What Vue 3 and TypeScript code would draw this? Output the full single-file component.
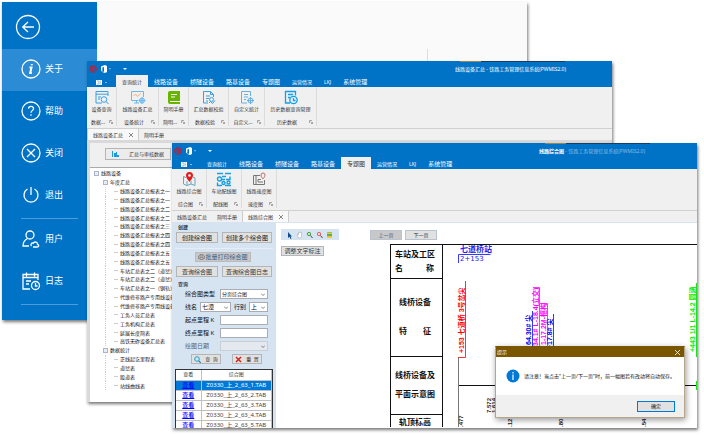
<script setup lang="ts">
import { ref } from 'vue'

interface RibbonGroup { label: string; icon: string; caption: string; width: number }
interface DocTab { label: string; active?: boolean }
interface AppWindow {
  id: string
  title: string
  activeTab: string
  groups: RibbonGroup[]
  docs: DocTab[]
}
interface TreeRow { text: string; level: number }

const menuTabs = ['查询统计', '线路设备', '桥隧设备', '路基设备', '专题图', '运营情况', 'LKJ', '系统管理']
const smallTabs = ['查询统计', '运营情况', 'LKJ']

const windows: AppWindow[] = [
  {
    id: 'summary',
    title: '线路设备汇总',
    activeTab: '查询统计',
    groups: [
      { label: '设备查询', icon: 'search', caption: '数据...', width: 30 },
      { label: '线路设备汇总', icon: 'monitor', caption: '设备统计', width: 42 },
      { label: '简明手册', icon: 'book', caption: '简明...', width: 30 },
      { label: '汇总数据校验', icon: 'check', caption: '数据校验', width: 40 },
      { label: '自定义统计', icon: 'custom', caption: '自定义...', width: 36 },
      { label: '历史数据查询管理', icon: 'history', caption: '历史数据', width: 52 },
    ],
    docs: [{ label: '线路设备汇总', active: true }, { label: '简明手册' }],
  },
  {
    id: 'diagram',
    title: '线路综合图',
    activeTab: '专题图',
    groups: [
      { label: '线路综合图', icon: 'pin', caption: '综合图', width: 35 },
      { label: '车站配线图', icon: 'wiring', caption: '配线图', width: 35 },
      { label: '线路速度图', icon: 'speed', caption: '速度图', width: 35 },
    ],
    docs: [{ label: '线路设备汇总' }, { label: '简明手册' }, { label: '线路综合图', active: true }],
  },
]

const tree: TreeRow[] = [
  { text: '线路设备', level: 0 },
  { text: '年度汇总', level: 1 },
  ...[
    '线路设备汇总报表之一', '线路设备汇总报表之一', '线路设备汇总报表之二', '线路设备汇总报表之二',
    '线路设备汇总报表之三', '线路设备汇总报表之四', '线路设备汇总报表之四', '线路设备汇总报表之五',
    '线路设备汇总报表之五', '车站汇总表之二（道岔）', '车站汇总表之二（道岔）', '车站汇总表之一（钢轨）',
    '代维修非路产专用线设备', '代维修非路产专用线设备', '工务人员汇总表', '工务机构汇总表',
    '延展长度简表', '高铁无砟设备汇总表',
  ].map((text) => ({ text, level: 2 })),
  { text: '数据统计', level: 1 },
  ...['正线起讫里程表', '道岔表', '股道表', '站线曲线表'].map((text) => ({ text, level: 2 })),
]

const files = [1, 2, 3, 4, 5].map((n) => `Z0330_上_2_63_${n}.TAB`)
const selectedFile = ref(0)
const dialogOpen = ref(true)
</script>

<template>
  <main class="desktop">
    <section class="window backstage">
      <nav class="side">
        <button class="back" aria-label="返回">
          <svg width="26" height="26" viewBox="0 0 26 26"><circle cx="13" cy="13" r="11.5" /><path d="M19 13H8M13 8l-5.300 5 5.300 5" /></svg>
        </button>
        <a class="entry current" href="#about">
          <svg width="20" height="20" viewBox="0 0 20 20"><circle cx="10" cy="10" r="9" /><path class="heavy" d="M8.500 8.500h2l-1.300 5.500h1.600M10.800 5v1.200" /></svg>关于
        </a>
        <a class="entry" href="#help">
          <svg width="20" height="20" viewBox="0 0 20 20"><circle cx="10" cy="10" r="9" /><path d="M7.500 7.600c.2-3.200 5.200-2.900 5 .1-.1 1.900-2.500 2-2.500 4M10 13.200v1.500" /></svg>帮助
        </a>
        <a class="entry" href="#close">
          <svg width="20" height="20" viewBox="0 0 20 20"><circle cx="10" cy="10" r="9" /><path d="M6 6l8 8M14 6l-8 8" /></svg>关闭
        </a>
        <a class="entry" href="#exit">
          <svg width="20" height="20" viewBox="0 0 20 20"><path d="M10 2v8M6.500 4a7 7 0 1 0 7 0" /></svg>退出
        </a>
        <hr>
        <a class="entry" href="#user">
          <svg width="20" height="20" viewBox="0 0 20 20"><circle cx="9" cy="6" r="4" /><path d="M6.500 9.500C3.500 11 2 13 2 17h6" /><path d="M10.500 17c-1.500-2 .5-3.500 1.800-2.800 1.200-2.200 4.500-1 4.200 1.200 2 .5 1.300 2.600-.5 2.600h-4" /></svg>用户
        </a>
        <a class="entry" href="#log">
          <svg width="20" height="20" viewBox="0 0 20 20"><path d="M9 18H2V3.500h15V9M2 6.500h15M5.500 1.500v4M13.500 1.500v4M5 10h5M5 13h3" /><circle cx="14.500" cy="14.500" r="4" /><path d="M14.500 12v3h2" /></svg>日志
        </a>
        <hr>
      </nav>
      <div class="pane"><div class="recent"></div><div class="info"></div></div>
    </section>

    <section v-for="win in windows" :key="win.id" class="window app" :class="win.id">
      <header class="titlebar">
        <svg class="rail" width="8" height="8" viewBox="0 0 8 8"><path d="M1.800 6.200A3 3 0 1 1 6.200 6.200M2.500 3.500h3M4 3.500v2.800M2 7h4" /></svg>
        <svg width="11" height="8" viewBox="0 0 11 8"><path d="M1 1.500 5 0l2 1v6L5 8 1 6.500l3 .3V1.900L2.400 2.400v3L1 6z" fill="#fff" /><path d="M9 3.500h2l-1 1z" fill="#fff" /></svg>
        <svg class="quick" width="4" height="4" viewBox="0 0 4 4"><path d="M0 1h4L2 3z" fill="#fff" /></svg>
        <h1><b>{{ win.title }}</b><span> - 铁路工务管理信息系统(PWMIS2.0)</span></h1>
      </header>
      <nav class="tabs">
        <button class="file" aria-label="文件">
          <svg width="11" height="5" viewBox="0 0 11 5"><path d="M0 0h6v5H0z" fill="#fff" /><path d="M1 1h2v3H1M4 1h1M4 2.500h1M4 4h1" stroke="#69a" stroke-width=".6" fill="none" /><path d="M9 2h2l-1 1z" fill="#fff" /></svg>
        </button>
        <button v-for="tab in menuTabs" :key="tab" class="tab" :class="{ active: tab === win.activeTab, small: smallTabs.includes(tab) }">{{ tab }}</button>
      </nav>
      <div class="ribbon">
        <div v-for="group in win.groups" :key="group.label" class="group" :style="{ width: group.width + 'px' }">
          <button class="tool">
            <svg width="16" height="15" viewBox="0 0 16 15" fill="none" stroke="#3aa0e0">
              <g v-if="group.icon === 'search'"><path d="M3 13H2V1.500h12V6M2 4.200h12M4 7h3M4 9h2M8 13H3" /><circle cx="10" cy="9.500" r="2.800" /><path d="m12 11.500 2.500 2.500" /></g>
              <g v-else-if="group.icon === 'monitor'"><path d="M8 10.500H1.500v-9h12V7M4 13h5M6.500 10.500V13" stroke="#6ab8f0" /><path d="m3.500 6 2-2 2 2.500 3-3" stroke="#f4b183" /><circle cx="12" cy="10.500" r="2.500" fill="#b8dcf6" stroke="#6ab8f0" /><path d="M12 7v7M8.500 10.500h7" stroke="#6ab8f0" /></g>
              <g v-else-if="group.icon === 'book'"><path d="M4 1h10v13H4a2 2 0 0 1-2-2V3a2 2 0 0 1 2-2z" fill="#68b500" stroke="none" /><path d="M5 4.500h6M5 7h4M4 11.500h10" stroke="#fff" /></g>
              <g v-else-if="group.icon === 'check'"><path d="M7 13H2.500V1.500h7l3 3V7M9.500 1.500v3h3M5 6h4M5 8.500h3M5 11h2" /><circle cx="10.500" cy="9.500" r="2" /><path d="m8 13 1.500-1.500 2 2 2.500-3" /></g>
              <g v-else-if="group.icon === 'custom'"><path d="M8 13H2.500V1.500h9V6M5 4.500h4M5 7h4M5 9.500h2" stroke="#6ab0df" /><circle cx="11.500" cy="10.500" r="2.500" stroke="#6ab0df" /><path d="M11.500 7v7M8 10.500h7" stroke="#6ab0df" /></g>
              <g v-else-if="group.icon === 'history'" stroke="#0ea0ee" stroke-width="1.300"><path d="M7 13H2.500V1.500h10v4M5 4.500h5M5 7.500h2" /><circle cx="10.500" cy="10" r="3.700" /><path d="M10.500 8v2.500h2" /></g>
              <g v-else-if="group.icon === 'pin'"><path d="M5 5.500 2.500 4.500V12L6 13.500l4-1.500 4 1.500V6L12 5.200M6 9v4M10 9v3" stroke="#68a6bb" /><path d="M8.500 0a3.500 3.500 0 0 0-3.500 3.500C5 6 8.500 10 8.500 10S12 6 12 3.500A3.500 3.500 0 0 0 8.500 0z" fill="#e21b1b" stroke="none" /><circle cx="8.500" cy="3.500" r="1.300" fill="#fff" stroke="none" /></g>
              <g v-else-if="group.icon === 'wiring'" stroke="#189fdf" stroke-width="1.400"><path d="M1 1.500h6M9 1.500h6M6 4.500h4M14 4.500v3h-4" /><circle cx="3.500" cy="7" r="2" /><path d="M6 7.500h3M1.500 10.500v3H6M9 13.500h6" /><circle cx="7.500" cy="11" r="1.500" /><circle cx="12.500" cy="10.500" r="1.500" /></g>
              <g v-else stroke="#777"><path d="M9 3.500H2.500v9h11V8M5 3.500v9M7 10V7.500h3M7 10h5" /><path d="M12 1a2 2 0 0 0-2 2c0 1.700 2 4 2 4s2-2.300 2-4a2 2 0 0 0-2-2z" stroke="#b96d6d" /></g>
            </svg>
            {{ group.label }}
          </button>
          <div class="caption">
            <span>{{ group.caption }}</span>
            <svg width="4" height="4" viewBox="0 0 4 4" fill="none" stroke="#888" stroke-width=".7"><path d="M.5 3V.5H3M1.500 1.500l2 2V2M3.500 3.500H2" /></svg>
          </div>
        </div>
      </div>
      <nav class="docs">
        <button v-for="doc in win.docs" :key="doc.label" class="doc" :class="{ active: doc.active }">
          {{ doc.label }}
          <svg v-if="doc.active" width="4" height="4" viewBox="0 0 4 4" stroke="#555" stroke-width=".7"><path d="M0 0l4 4M4 0 0 4" /></svg>
        </button>
      </nav>

      <div v-if="win.id === 'summary'" class="summary-body">
        <div class="actions">
          <button class="btn">
            <svg width="7" height="6" viewBox="0 0 7 6"><path d="M0 0h1v6H0zM2 2h2v4H2zM4 1h1v5H4zM5 4h2v2H5z" fill="#1a9be0" /></svg>
            汇总与审核数据
          </button>
        </div>
        <ul class="tree">
          <li v-for="(row, i) in tree" :key="i" :class="'level' + row.level">
            <i :class="row.level < 2 ? 'box' : 'dash'"></i>{{ row.text }}
          </li>
        </ul>
      </div>

      <div v-else class="diagram-body">
        <aside class="panel">
          <h2>创建</h2>
          <div class="pair create"><button class="btn">创建综合图</button><button class="btn">创建多个综合图</button></div>
          <button class="btn print">
            <svg width="7" height="6" viewBox="0 0 7 6" fill="none" stroke="#777" stroke-width=".7"><path d="M2 2V.5h3V2M2 4.500H.5V2h6v2.500H5M2 3.500h3v2H2z" /></svg>批量打印综合图
          </button>
          <div class="pair look"><button class="btn">查询综合图</button><button class="btn">查询综合图日志</button></div>
          <h2>查询</h2>
          <form class="query" @submit.prevent>
            <div class="row">
              <label for="kind">综合图类型</label>
              <span class="pick wide"><select id="kind"><option>分页综合图</option></select><svg width="4" height="3" viewBox="0 0 4 3"><path d="M0 .5l2 2 2-2" /></svg></span>
            </div>
            <div class="row">
              <label for="line">线名</label>
              <span class="pick line"><select id="line"><option>七漳</option></select><svg width="4" height="3" viewBox="0 0 4 3"><path d="M0 .5l2 2 2-2" /></svg></span>
              <label for="dir">行别</label>
              <span class="pick dir"><select id="dir"><option>上</option></select><svg width="4" height="3" viewBox="0 0 4 3"><path d="M0 .5l2 2 2-2" /></svg></span>
            </div>
            <div class="row"><label for="from">起点里程 K</label><input id="from" class="wide" type="text"></div>
            <div class="row"><label for="to">终点里程 K</label><input id="to" class="wide" type="text"></div>
            <div class="row">
              <label class="dim" for="date">绘图日期</label>
              <span class="pick wide off"><select id="date" disabled><option></option></select><svg width="4" height="3" viewBox="0 0 4 3"><path d="M0 .5l2 2 2-2" /></svg></span>
            </div>
            <div class="submit">
              <button class="btn" type="submit"><svg width="7" height="7" viewBox="0 0 7 7" fill="none"><circle cx="3" cy="3" r="2.300" fill="#c6ecfa" stroke="#2299cc" /><path d="m4.800 4.800 2 2" stroke="#2277bb" stroke-width="1.200" /></svg>查&nbsp; 询</button>
              <button class="btn" type="reset"><svg width="7" height="7" viewBox="0 0 7 7"><path d="m1 1 5 5M6 1 1 6" stroke="#d71912" stroke-width="1.400" /></svg>重&nbsp; 置</button>
            </div>
          </form>
          <div class="results">
            <table>
              <thead><tr><th>查看</th><th>综合图</th></tr></thead>
              <tbody>
                <tr v-for="(file, i) in files" :key="file" :class="{ selected: i === selectedFile }" @click="selectedFile = i">
                  <td><a href="#view">查看</a></td><td>{{ file }}</td>
                </tr>
              </tbody>
            </table>
          </div>
        </aside>
        <div class="tools">
          <div class="toolbar">
            <button aria-label="选择"><svg width="7" height="8" viewBox="0 0 7 8"><path d="M2 1v6l1.500-1.300L4.500 8l1-.5-1-2H6z" fill="#124d88" /></svg></button>
            <button aria-label="平移"><svg width="7" height="8" viewBox="0 0 7 8"><path d="M1.500 4.500V3l1 1V1.500h1V1h1v.5h1v4L4.500 7h-2z" fill="#fff" stroke="#aaa" stroke-width=".6" /></svg></button>
            <button aria-label="放大"><svg width="7" height="8" viewBox="0 0 7 8"><circle cx="3" cy="3" r="1.700" fill="#bfe8b5" stroke="#49a34a" /><path d="m4.500 4.500 2 2.500" stroke="#444" /></svg></button>
            <button aria-label="缩小"><svg width="7" height="8" viewBox="0 0 7 8"><circle cx="3" cy="3" r="1.700" fill="#fbd1d1" stroke="#d66" /><path d="m4.500 4.500 2 2.500" stroke="#444" /></svg></button>
            <button aria-label="图层"><svg width="7" height="8" viewBox="0 0 7 8"><path d="M1 1h5v6H1z" fill="#f1c43c" /><path d="M1 3h5v2H1z" fill="#5cb146" /><path d="M1 1h5v1H1z" fill="#8bca50" /></svg></button>
          </div>
          <button class="btn adjust">调整文字标注</button>
        </div>
        <div class="sheet">
          <div class="pager"><button class="btn prev">上一页</button><button class="btn">下一页</button></div>
          <svg class="chart" role="img" aria-label="线路综合图">
            <g stroke="#111" fill="none">
              <path d="M1.500 184V1.500M53.500 1.500V184M1.500 35.500h52M1.500 113.500h52M1.500 171.500h52" />
              <line x1="1" x2="100%" y1="1.500" y2="1.500" />
              <line x1="69" x2="100%" y1="142.500" y2="142.500" />
              <path d="M69.500 114v70" stroke="#777" />
            </g>
            <g class="names">
              <text x="6" y="14">车站及工区</text><text x="6" y="28">名</text><text x="37" y="28">称</text>
              <text x="10" y="62">线桥设备</text><text x="10" y="91">特</text><text x="34" y="91">征</text>
              <text x="6" y="135">线桥设备及</text><text x="6" y="154">平面示意图</text><text x="10" y="182">轨顶标高</text>
            </g>
            <g fill="#2222ee"><text class="station" x="71" y="9">七道桥站</text><text class="mile" x="71" y="18">2+153</text></g>
            <path d="M69.500 20v-8.500h32M143.500 103V68M164.500 103V71" stroke="#3a3aff" fill="none" />
            <path d="M69 114.500h7.500V38" stroke="#f33" fill="none" />
            <path d="M144 44.500h6.500V103M151 60.500h7.500V103" stroke="#f3f" fill="none" />
            <g class="marks">
              <text transform="translate(75 110) rotate(-90)" fill="#f00">+153 七道桥 3号岔尖</text>
              <text transform="translate(142 102) rotate(-90)" fill="#00f">64.30# 尖</text>
              <text transform="translate(149 103) rotate(-90)" fill="#f0f">34.1# L-18.4(立交)</text>
              <text transform="translate(157 102) rotate(-90)" fill="#f0f">1-17.2M-框构</text>
              <text transform="translate(163 106) rotate(-90)" fill="#00f">+17.8# 尖</text>
              <text transform="translate(306 109) rotate(-90)" fill="#0e0">+443 1/1 L-14.2 圆涵</text>
            </g>
            <path d="M307.500 40v74M307.500 138v9" stroke="#2d2" />
            <g class="levels">
              <text transform="translate(74 184) rotate(-90)">.477</text>
              <text transform="translate(102 170) rotate(-90)">7.572</text>
              <text transform="translate(107 170) rotate(-90)">1.614</text>
              <text transform="translate(123 184) rotate(-90)">.12</text>
              <text transform="translate(174 184) rotate(-90)">.80</text>
              <text transform="translate(257 184) rotate(-90)">.54</text>
            </g>
          </svg>
        </div>
        <div v-if="dialogOpen" class="dialog" role="dialog" aria-labelledby="tip-title">
          <header><span id="tip-title">提示</span><button aria-label="关闭提示" @click="dialogOpen = false"><svg width="5" height="5" viewBox="0 0 5 5" stroke="#fff" stroke-width=".8"><path d="M0 0l5 5M5 0 0 5" /></svg></button></header>
          <div class="message">
            <svg width="14" height="14" viewBox="0 0 14 14"><circle cx="7" cy="7" r="6.500" fill="#0078d7" /><path d="M7 3v1.500M7 5.500V11" stroke="#fff" stroke-width="1.200" /></svg>
            <p>请注意！当点击"上一页/下一页"时，前一幅图若有改动将自动保存。</p>
          </div>
          <footer><button @click="dialogOpen = false">确定</button></footer>
        </div>
      </div>
    </section>
  </main>
</template>

<style>
body { margin: 0; background: #fff; }
</style>

<style scoped>
.desktop { position: relative; height: 100vh; min-height: 435px; overflow: hidden; font: 5px/8px "Noto Sans", "Noto Sans CJK SC", sans-serif; color: #333; }
.desktop *, .desktop *::before { box-sizing: border-box; }
svg { display: block; flex: none; }
button, input, select { font: inherit; color: inherit; padding: 0; margin: 0; border: 0; background: none; border-radius: 0; white-space: nowrap; }
a { color: inherit; text-decoration: none; }
h1, h2, p, ul { margin: 0; padding: 0; font: inherit; }
.window { position: absolute; box-shadow: 1px 2px 3px #0008; }

.backstage { left: 2px; right: 177px; top: 2px; bottom: 115px; display: flex; background: #fafafa; }
.side { width: 95px; background: #0173c7; color: #fff; display: flex; flex-direction: column; }
.side svg { fill: none; stroke: #fff; stroke-width: 1.3; }
.side .heavy { stroke-width: 2; }
.back { height: 47px; padding: 3px 0 0 13px; display: flex; align-items: center; }
.entry { height: 42px; display: flex; align-items: center; gap: 4px; padding: 0 0 2px 19px; font-size: 9px; line-height: 12px; }
.entry.current { background: #2b8bd4; }
.side hr { width: 57px; height: 1px; margin: 1px 0 0 19px; border: 0; background: #4c9ddb; }
.pane { flex: 1; display: flex; padding-top: 47px; }
.recent { flex: 331; }
.info { flex: 99; border-left: 1px solid #ddd; }

.app { display: flex; flex-direction: column; background: #f0f0f0; }
.summary { left: 87px; right: 92px; top: 61px; bottom: 33px; }
.diagram { left: 172px; right: 7px; top: 143px; bottom: 7px; }
.titlebar { height: 14px; background: linear-gradient(90deg, #0173c7 71%, #8e8a5c 71% 75%, #173f63 75% 91%, #0173c7 91%) 0 0 / 100% 1px no-repeat #0173c7; display: flex; align-items: center; padding: 2px 46px 0 2px; gap: 3px; }
.rail { fill: none; stroke: #e01020; stroke-width: 1.2; }
.quick { margin-left: 9px; }
.titlebar h1 { margin-left: auto; color: #fff; white-space: nowrap; }
.titlebar b { font-weight: 400; }
.diagram .titlebar b { font-weight: 700; }
.diagram .titlebar { padding-right: 52px; }
.diagram .titlebar span { color: #8abce3; }
.tabs { height: 12px; background: #0173c7; color: #fff; display: flex; }
.file { width: 29px; padding: 2px 0 0 9px; display: flex; align-items: center; }
.tab { padding: 1px 6px 0; font-size: 6px; }
.tab.small { font-size: 5px; }
.tab.active { background: #f0f0f0; color: #333; }
.ribbon { height: 42px; display: flex; border-bottom: 1px solid #d0d0d0; }
.group { padding: 3px 0 0; display: flex; flex-direction: column; border-right: 1px solid #dcdcdc; margin-bottom: 2px; }
.tool { display: flex; flex-direction: column; align-items: center; white-space: nowrap; line-height: 8px; }
.caption { display: flex; align-items: center; margin-top: auto; padding-right: 3px; }
.caption span { flex: 1; text-align: center; white-space: nowrap; }
.docs { height: 11px; display: flex; }
.doc { display: flex; align-items: center; gap: 6px; padding: 0 5px; }
.doc.active { background: #f8f8f8; border: 1px solid #ccc; border-width: 0 1px; }

.btn { background: #e1e1e1; border: 1px solid #b5b5b5; display: flex; align-items: center; justify-content: center; gap: 2px; height: 11px; font-size: 6px; line-height: 8px; }
.summary-body { flex: 1; min-height: 0; display: flex; flex-direction: column; border-top: 3px solid #d9d9d9; border-left: 3px solid #dadada; }
.actions { height: 24px; padding: 5px 15px; }
.actions .btn { width: 66px; height: 12px; gap: 10px; font-size: 5px; background: #ececec; }
.tree { flex: 1; min-height: 0; list-style: none; background: #fff; border-top: 1px solid #aaa; padding: 1px 0 12px 4px; display: grid; grid-auto-rows: 1fr; color: #111; }
.tree li { display: flex; align-items: center; gap: 2px; white-space: nowrap; line-height: 8px; }
.level1 { padding-left: 9px; }
.level2 { margin-left: 11px; padding-left: 8px; border-left: 1px dotted #ccc; }
.box { width: 5px; height: 5px; border: 1px solid #aab4c8; background: #e8ecf5; }
.dash { width: 4px; border-top: 1px solid #ccc; }

.diagram-body { flex: 1; min-height: 0; display: flex; overflow: hidden; background: #fff; border-top: 1px solid #d6e4f2; position: relative; }
.panel { width: 104px; background: #d6e4f2; padding: 0 3px; display: flex; flex-direction: column; overflow: hidden; flex: none; }
.panel h2 { padding-left: 3px; height: 9px; line-height: 9px; font-weight: 500; color: #111; flex: none; }
.pair { display: grid; grid-template-columns: 42px 50px; gap: 4px; padding-left: 1px; }
.create { padding-bottom: 5px; margin-bottom: 3px; border-bottom: 1px solid #e5eef8; color: #111; }
.print { width: 56px; height: 10px; margin: 0 20px 4px; background: #c8c8c8; border-color: #bbb; color: #345d88; gap: 0; flex: none; }
.look { margin-bottom: 3px; }
.query { display: flex; flex-direction: column; gap: 3px; padding-left: 10px; }
.row { display: flex; align-items: center; gap: 3px; height: 10px; width: 83px; font-size: 6px; white-space: nowrap; color: #111; }
.row .wide { width: 48px; margin-left: auto; }
.dim { color: #567; }
.pick { position: relative; height: 10px; border: 1px solid #a9adb3; background: #fff; }
.pick select { appearance: none; width: 100%; height: 8px; display: block; line-height: 8px; padding-left: 1px; font-size: 5px; }
.pick svg { position: absolute; right: 2px; top: 3px; fill: none; stroke: #555; stroke-width: 0.7; pointer-events: none; }
.pick.off { background: #e4e9ef; border-color: #c8ced6; }
.line { width: 31px; }
.dir { width: 19px; margin-left: auto; }
.line select, .dir select { font-size: 6px; }
.row input { height: 10px; background: #fff; border: 1px solid #a9adb3; }
.submit { display: flex; gap: 11px; padding-left: 6px; }
.submit .btn { width: 30px; height: 10px; gap: 4px; font-size: 5px; }
.results { flex: 1; min-height: 0; margin: 5px 0 0; border: 1px solid #333; border-width: 1px 1px 0; background: #fff; overflow: hidden; }
table { width: 100%; border-collapse: collapse; table-layout: fixed; }
th, td { height: 10px; line-height: 9px; padding: 0; border: 1px solid #c0c0c0; border-width: 0 1px 1px 0; text-align: center; font-weight: 400; white-space: nowrap; }
th:first-child { width: 25px; }
td { font-size: 6px; color: #444; }
td a { color: #00f; text-decoration: underline; font-weight: 500; }
.selected td { background: #0078d7; color: #fff; }
.tools { width: 94px; padding: 6px 0 0 5px; flex: none; }
.toolbar { width: 58px; height: 11px; background: #d6e4f2; display: flex; align-items: center; gap: 3px; padding-left: 5px; }
.adjust { margin-top: 6px; width: 43px; height: 10px; }
.sheet { flex: 1; min-width: 0; display: flex; flex-direction: column; padding-top: 7px; }
.pager { display: flex; gap: 3px; padding-bottom: 3px; }
.pager .btn { width: 32px; height: 10px; font-size: 5px; border-color: #b8c4d0; }
.pager .prev { background: #c8c8c8; color: #345d88; }
.chart { flex: 1; min-height: 0; margin-left: 19px; width: calc(100% - 19px); overflow: hidden; }
.names { font: 700 8px "Noto Sans CJK SC", sans-serif; fill: #111; }
.station { font: 700 8px "Noto Sans CJK SC", sans-serif; }
.mile { font: 7px "DejaVu Sans", sans-serif; }
.marks { font: 700 7px "Liberation Sans", "Noto Sans CJK SC", sans-serif; }
.levels { font: 700 6px "Liberation Sans", sans-serif; fill: #222; }

.dialog { position: absolute; right: 12px; top: 123px; width: 190px; background: #fff; border: 1px solid #7a5600; border-color: #7a5600 #b5a68a #b5a68a; box-shadow: 1px 2px 6px #0006; color: #111; }
.dialog header { height: 10px; background: #7a5600; color: #fff; display: flex; align-items: center; justify-content: space-between; padding: 0 4px 0 1px; }
.message { height: 38px; display: flex; align-items: center; gap: 4px; padding-left: 10px; white-space: nowrap; }
.dialog footer { height: 22px; background: #f0f0f0; display: flex; align-items: center; justify-content: flex-end; padding-right: 9px; }
.dialog footer button { width: 38px; height: 11px; border: 1px solid #0078d7; background: #e1e1e1; }
</style>
